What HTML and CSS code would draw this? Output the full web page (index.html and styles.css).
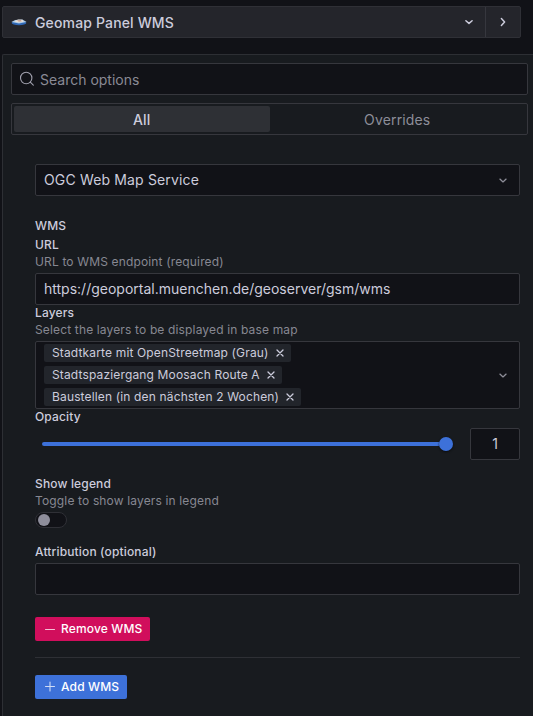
FILE: index.html
```
<!DOCTYPE html>
<html lang="en">
<head>
<meta charset="utf-8">
<title>Geomap Panel WMS</title>
<link rel="stylesheet" href="styles.css">
</head>
<body>
<header class="viz-picker">
  <button class="viz-current">
    <svg class="viz-logo" width="16" height="16" viewBox="0 0 16 16">
      <ellipse cx="8" cy="9" rx="7.4" ry="2.2" fill="#2f67b5"/>
      <path d="M.4 7.9 4.2 5.9 11.4 5.6 15.6 7.9 8 9.6Z" fill="#a9c9e6"/>
      <path d="M3.2 7.4 7 5.6 11.5 5.8 12.8 7.8 7.5 8.5Z" fill="#e6dfd8"/>
      <path d="M6 6.5 9.8 6.2 10.8 7.2 7.8 7.6Z" fill="#b98a78"/>
    </svg>
    <span class="viz-name">Geomap Panel WMS</span>
    <svg class="chevron" width="16" height="16" viewBox="0 0 16 16"><path d="m4.9 6.7 3.1 2.7 3.1-2.7"/></svg>
  </button>
  <button class="viz-collapse">
    <svg class="chevron" width="16" height="16" viewBox="0 0 16 16"><path d="m6.4 4.6 3.2 3.4-3.2 3.4"/></svg>
  </button>
</header>
<main class="options-pane">
  <label class="field search">
    <svg class="search-icon" width="16" height="16" viewBox="0 0 16 16"><circle cx="7.2" cy="7" r="5.7"/><path d="m11.3 11.1 3 3"/></svg>
    <input type="text" placeholder="Search options">
  </label>
  <div class="tabs">
    <button class="tab active">All</button>
    <button class="tab">Overrides</button>
  </div>
  <section class="form">
    <div class="field select type-select">
      <span>OGC Web Map Service</span>
      <svg class="chevron muted" width="16" height="16" viewBox="0 0 16 16"><path d="m4.9 7.1 3.1 2.8 3.1-2.8"/></svg>
    </div>
    <h2 class="label group">WMS</h2>
    <div class="label">URL</div>
    <div class="hint">URL to WMS endpoint (required)</div>
    <input class="field" type="text" value="https://geoportal.muenchen.de/geoserver/gsm/wms">
    <div class="label">Layers</div>
    <div class="hint">Select the layers to be displayed in base map</div>
    <div class="field select multi">
      <div class="tags">
        <span class="tag">Stadtkarte mit OpenStreetmap (Grau)<svg width="8" height="8" viewBox="0 0 8 8"><path d="m1 1 6 6m0-6L1 7"/></svg></span>
        <span class="tag">Stadtspaziergang Moosach Route A<svg width="8" height="8" viewBox="0 0 8 8"><path d="m1 1 6 6m0-6L1 7"/></svg></span>
        <span class="tag">Baustellen (in den nächsten 2 Wochen)<svg width="8" height="8" viewBox="0 0 8 8"><path d="m1 1 6 6m0-6L1 7"/></svg></span>
      </div>
      <svg class="chevron muted" width="16" height="16" viewBox="0 0 16 16"><path d="m4.9 7.1 3.1 2.8 3.1-2.8"/></svg>
    </div>
    <div class="label">Opacity</div>
    <div class="slider-row">
      <div class="slider"><div class="track"></div><div class="handle"></div></div>
      <input class="field number" type="text" value="1">
    </div>
    <div class="label legend">Show legend</div>
    <div class="hint">Toggle to show layers in legend</div>
    <div class="switch"><div class="knob"></div></div>
    <div class="label attribution">Attribution (optional)</div>
    <input class="field" type="text">
    <button class="action remove">
      <svg width="12" height="12" viewBox="0 0 12 12"><path d="M1.5 6.5h9"/></svg>Remove WMS
    </button>
    <hr>
    <button class="action add">
      <svg width="12" height="12" viewBox="0 0 12 12"><path d="M1.5 5.5h9M6 1v9"/></svg>Add WMS
    </button>
  </section>
</main>
</body>
</html>
```
FILE: styles.css
```
* { box-sizing: border-box; }

body {
  margin: 0;
  height: 716px;
  padding: 6px 0 0 2px;
  overflow: hidden;
  display: flex;
  flex-direction: column;
  background: #111217;
  color: #ccccdc;
  font: 14px/22px Inter, "Liberation Sans", sans-serif;
  letter-spacing: 0.15px;
}

button, input { font: inherit; color: inherit; }
button { border: 0; padding: 0; background: none; letter-spacing: inherit; }
input { letter-spacing: 0; }
svg { flex: none; fill: none; stroke-linecap: round; stroke-linejoin: round; }

.viz-picker {
  display: flex;
  flex: none;
  width: 519px;
  height: 32px;
  border: 1px solid #2f3036;
  border-radius: 2px;
  background: #24252b;
}
.viz-current {
  display: flex;
  flex: 1;
  align-items: center;
  gap: 8px;
  padding: 0 8px;
}
.viz-name { flex: 1; text-align: left; font-weight: 500; padding-top: 2px; }
.viz-collapse {
  display: flex;
  width: 35px;
  align-items: center;
  justify-content: center;
  border-left: 1px solid #36373e;
}
.chevron { stroke: #ccccdc; stroke-width: 1.5; }
.chevron.muted { stroke: #8e8e99; stroke-width: 1.3; }

.options-pane {
  flex: 1;
  margin-top: 16px;
  padding: 8px 5px 0 8px;
  border: solid #2d2f34;
  border-width: 1px 0 0 1px;
  border-radius: 2px 0 0;
  background: #181b1f;
}

.field {
  display: flex;
  align-items: center;
  width: 100%;
  height: 32px;
  padding: 0 8px;
  border: 1px solid #36373d;
  border-radius: 2px;
  background: #111217;
  outline: 0;
}
input.field { padding-bottom: 1px; }
.search { gap: 5px; padding-left: 7px; }
.search input { flex: 1; padding: 2px 0 0; border: 0; background: none; outline: 0; }
.search input::placeholder { color: #8a8a95; opacity: 1; }
.search-icon { stroke: #a0a0ad; stroke-width: 1.1; }

.tabs {
  display: flex;
  height: 32px;
  margin-top: 8px;
  padding: 2px;
  border: 1px solid #36373d;
  border-radius: 2px;
}
.tab { flex: 1; padding-top: 2px; border-radius: 2px; color: #8d8e99; }
.tab.active { background: #2e3035; color: #ccccdc; font-weight: 500; }

.form { margin: 29px 8px 0 24px; }
.select { justify-content: space-between; }
.label {
  margin: 0;
  font-size: 12px;
  line-height: 16px;
  font-weight: 500;
}
.label.group { margin: 22px 0 3px; }
.hint {
  padding: 1px 0 3px;
  font-size: 12px;
  line-height: 16px;
  color: #878892;
}
.multi { height: 68px; }
.tags { display: flex; flex-direction: column; align-items: flex-start; gap: 4px; }
.tag {
  display: flex;
  align-items: center;
  gap: 7px;
  height: 18px;
  padding: 0 7px 0 8px;
  border-radius: 2px;
  background: #22252b;
  font-size: 12px;
}
.tag svg { stroke: #ccccdc; stroke-width: 1.3; }

.slider-row { display: flex; align-items: center; margin-top: 3px; gap: 17px; }
.slider { display: flex; align-items: center; flex: 1; padding-left: 7px; }
.track { flex: 1; height: 4px; border-radius: 2px; background: #3d71d9; }
.handle {
  width: 14px;
  height: 14px;
  margin-left: -7px;
  border-radius: 50%;
  background: #3d71d9;
  box-shadow: 0 1px 2px #0b0c0e;
}
.number { width: 50px; text-align: center; }

.legend { margin-top: 16px; }
.switch {
  width: 32px;
  height: 16px;
  padding: 1px 2px;
  border: 1px solid #2f3036;
  border-radius: 8px;
  background: #111217;
}
.knob { width: 12px; height: 12px; border-radius: 50%; background: #8e8e9b; }
.attribution { margin: 16px 0 3px; }

.action {
  display: flex;
  align-items: center;
  gap: 5px;
  height: 24px;
  padding: 0 0 0 9px;
  border-radius: 2px;
  color: #fff;
  font-size: 12px;
  font-weight: 500;
  white-space: nowrap;
}
.action svg { stroke: #fff; stroke-opacity: .75; stroke-width: 1.1; }
.remove { width: 115px; margin-top: 22px; background: #d10e5c; }
.add { width: 92px; background: #3d71d9; }
hr { margin: 16px 0 17px; border: 0; border-top: 1px solid #2e3035; }
```
